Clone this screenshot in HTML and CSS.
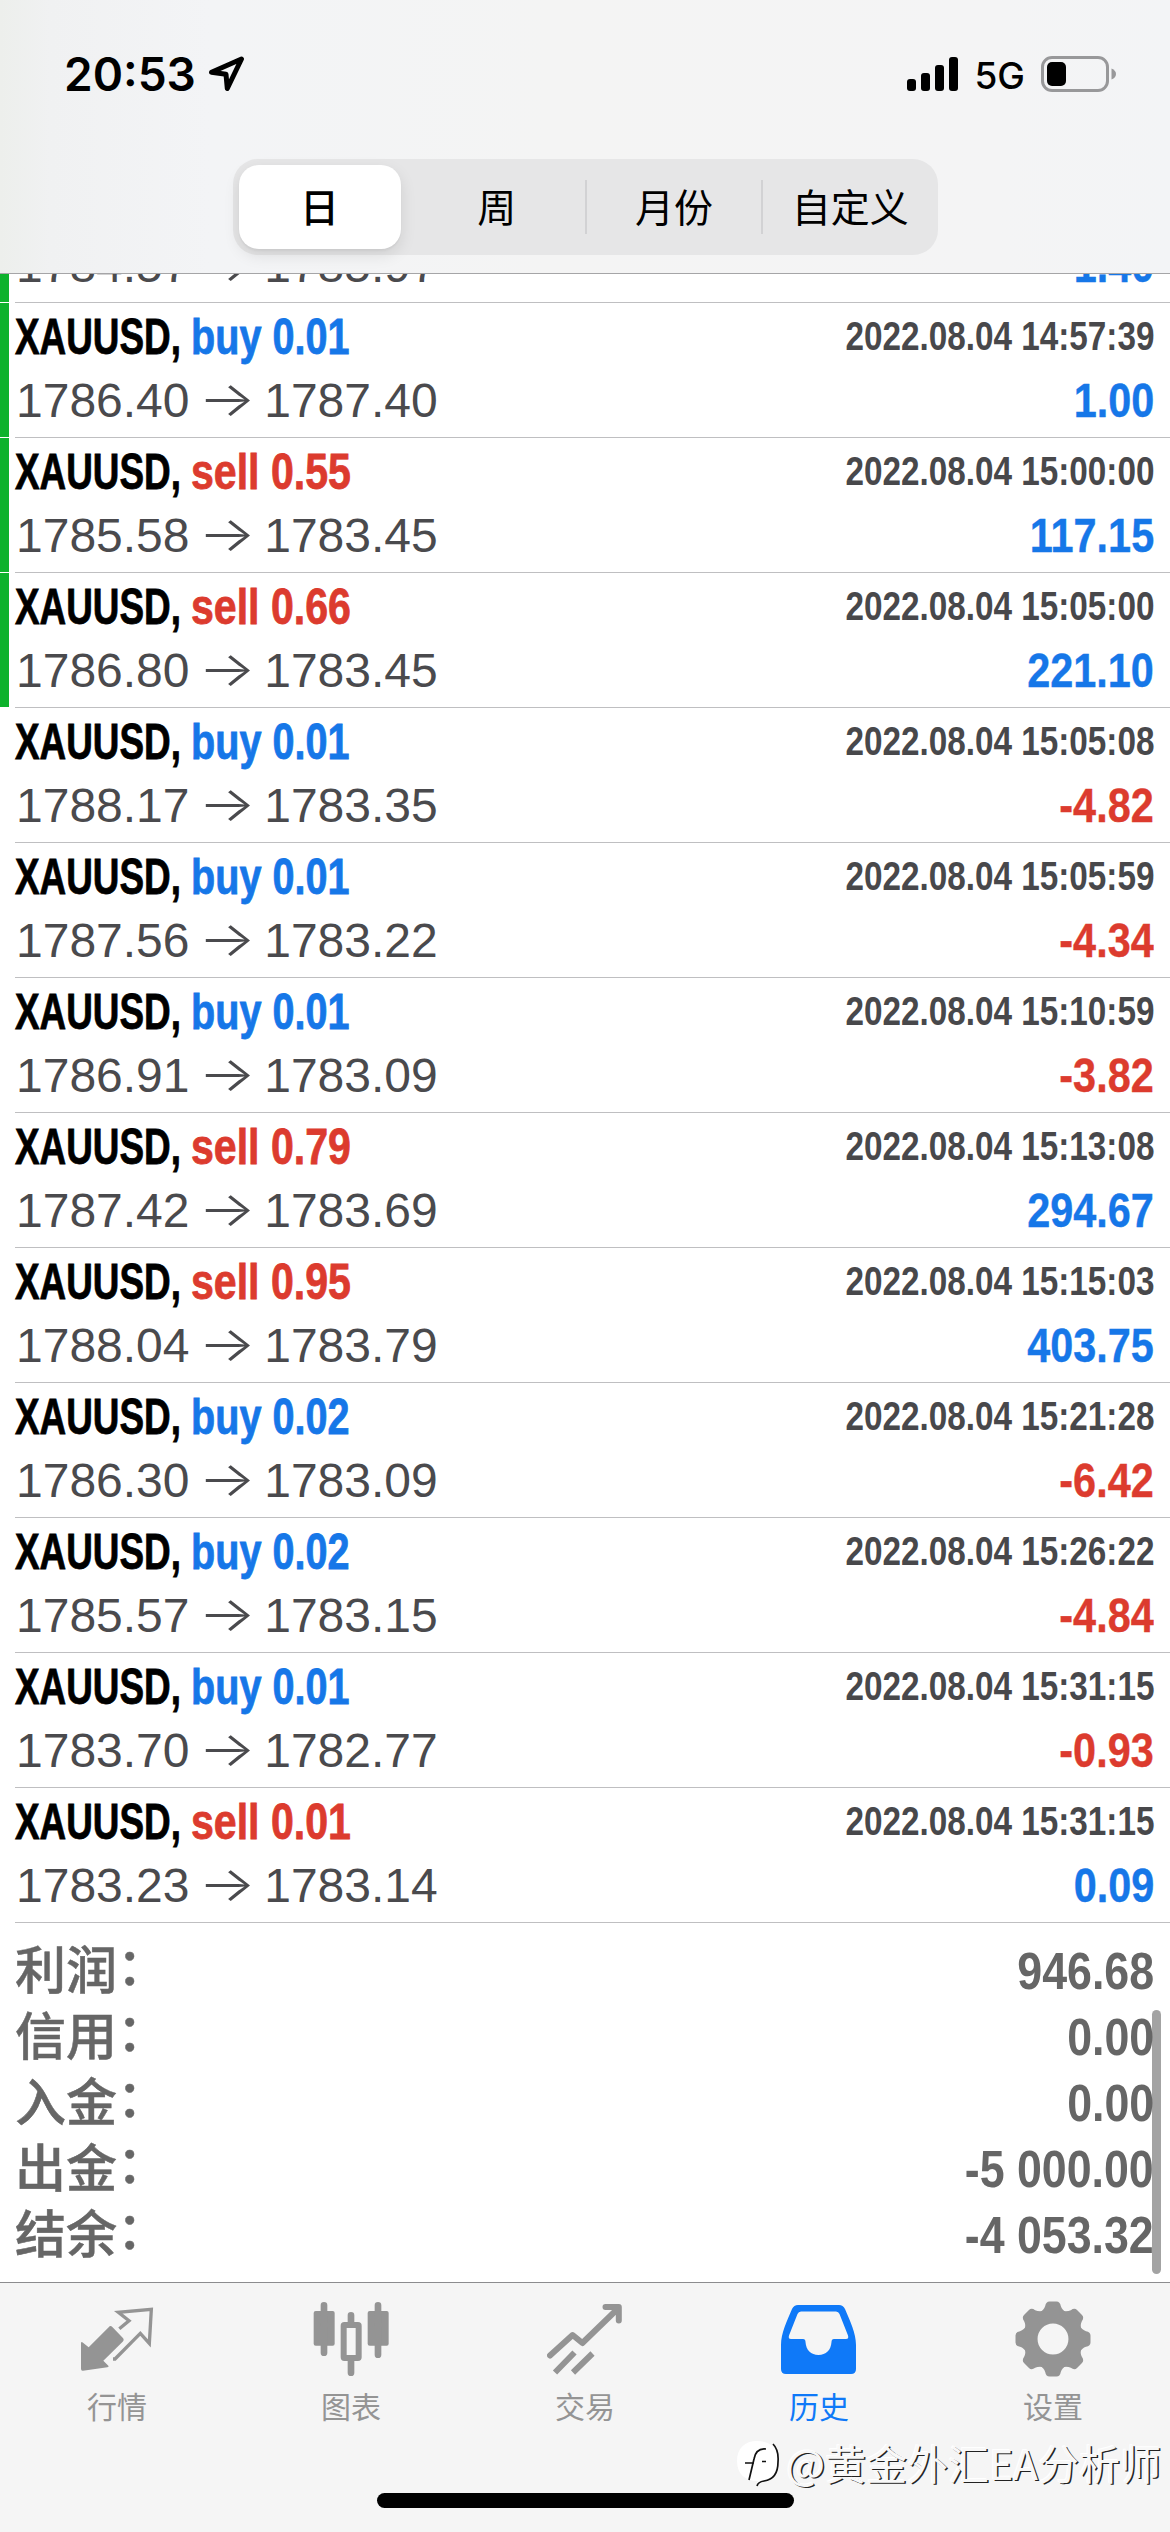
FILE: index.html
```html
<!DOCTYPE html>
<html lang="zh-CN">
<head>
<meta charset="utf-8">
<title>历史</title>
<link rel="stylesheet" href="styles.css">
</head>
<body>
<div class="screen">
  <header class="header">
    <div class="status">
      <div class="status-left">
        <span class="time">20:53</span>
        <svg class="location" viewBox="0 0 37 36" width="37" height="36"><path d="M3.5 16.3 33.5 3 19.3 32.5 18 18.3Z"/></svg>
      </div>
      <div class="status-right">
        <svg class="signal" viewBox="0 0 52 34" width="52" height="34"><rect x="0" y="22" width="9" height="12" rx="3"/><rect x="14" y="16" width="9" height="18" rx="3"/><rect x="28" y="8" width="9" height="26" rx="3"/><rect x="42" y="0" width="9" height="34" rx="3"/></svg>
        <span class="network">5G</span>
        <svg class="battery" viewBox="0 0 75 36" width="75" height="36"><rect class="battery-case" x="1.5" y="1.5" width="65" height="33" rx="9.5"/><rect x="6" y="6" width="19" height="24" rx="5"/><path class="battery-tip" d="M70.5 12.5Q75 14.5 75 18T70.5 23.500Z"/></svg>
      </div>
    </div>
    <nav class="segments">
      <span class="segment selected"><b>日</b></span>
      <span class="segment">周</span>
      <span class="segment divided">月份</span>
      <span class="segment divided">自定义</span>
    </nav>
  </header>

  <main class="history">
    <ul class="deals">
      <li class="deal cut closed"><div class="line bottom"><span class="price">1784.57 <i>→</i> 1785.97</span><span class="profit up">1.40</span></div></li>
      <li class="deal closed"><div class="line top"><span class="symbol">XAUUSD,</span><span class="action buy">buy 0.01</span><time>2022.08.04 14:57:39</time></div><div class="line bottom"><span class="price">1786.40 <i>→</i> 1787.40</span><span class="profit up">1.00</span></div></li>
      <li class="deal closed"><div class="line top"><span class="symbol">XAUUSD,</span><span class="action sell">sell 0.55</span><time>2022.08.04 15:00:00</time></div><div class="line bottom"><span class="price">1785.58 <i>→</i> 1783.45</span><span class="profit up">117.15</span></div></li>
      <li class="deal closed"><div class="line top"><span class="symbol">XAUUSD,</span><span class="action sell">sell 0.66</span><time>2022.08.04 15:05:00</time></div><div class="line bottom"><span class="price">1786.80 <i>→</i> 1783.45</span><span class="profit up">221.10</span></div></li>
      <li class="deal"><div class="line top"><span class="symbol">XAUUSD,</span><span class="action buy">buy 0.01</span><time>2022.08.04 15:05:08</time></div><div class="line bottom"><span class="price">1788.17 <i>→</i> 1783.35</span><span class="profit down">-4.82</span></div></li>
      <li class="deal"><div class="line top"><span class="symbol">XAUUSD,</span><span class="action buy">buy 0.01</span><time>2022.08.04 15:05:59</time></div><div class="line bottom"><span class="price">1787.56 <i>→</i> 1783.22</span><span class="profit down">-4.34</span></div></li>
      <li class="deal"><div class="line top"><span class="symbol">XAUUSD,</span><span class="action buy">buy 0.01</span><time>2022.08.04 15:10:59</time></div><div class="line bottom"><span class="price">1786.91 <i>→</i> 1783.09</span><span class="profit down">-3.82</span></div></li>
      <li class="deal"><div class="line top"><span class="symbol">XAUUSD,</span><span class="action sell">sell 0.79</span><time>2022.08.04 15:13:08</time></div><div class="line bottom"><span class="price">1787.42 <i>→</i> 1783.69</span><span class="profit up">294.67</span></div></li>
      <li class="deal"><div class="line top"><span class="symbol">XAUUSD,</span><span class="action sell">sell 0.95</span><time>2022.08.04 15:15:03</time></div><div class="line bottom"><span class="price">1788.04 <i>→</i> 1783.79</span><span class="profit up">403.75</span></div></li>
      <li class="deal"><div class="line top"><span class="symbol">XAUUSD,</span><span class="action buy">buy 0.02</span><time>2022.08.04 15:21:28</time></div><div class="line bottom"><span class="price">1786.30 <i>→</i> 1783.09</span><span class="profit down">-6.42</span></div></li>
      <li class="deal"><div class="line top"><span class="symbol">XAUUSD,</span><span class="action buy">buy 0.02</span><time>2022.08.04 15:26:22</time></div><div class="line bottom"><span class="price">1785.57 <i>→</i> 1783.15</span><span class="profit down">-4.84</span></div></li>
      <li class="deal"><div class="line top"><span class="symbol">XAUUSD,</span><span class="action buy">buy 0.01</span><time>2022.08.04 15:31:15</time></div><div class="line bottom"><span class="price">1783.70 <i>→</i> 1782.77</span><span class="profit down">-0.93</span></div></li>
      <li class="deal"><div class="line top"><span class="symbol">XAUUSD,</span><span class="action sell">sell 0.01</span><time>2022.08.04 15:31:15</time></div><div class="line bottom"><span class="price">1783.23 <i>→</i> 1783.14</span><span class="profit up">0.09</span></div></li>
    </ul>
    <dl class="summary">
      <div><dt>利润<span>：</span></dt><dd>946.68</dd></div>
      <div><dt>信用<span>：</span></dt><dd>0.00</dd></div>
      <div><dt>入金<span>：</span></dt><dd>0.00</dd></div>
      <div><dt>出金<span>：</span></dt><dd>-5 000.00</dd></div>
      <div><dt>结余<span>：</span></dt><dd>-4 053.32</dd></div>
    </dl>
    <div class="scrollbar"></div>
  </main>

  <footer class="tabbar">
    <nav class="tabs">
      <a class="tab">
        <svg viewBox="84 90 228 234" width="76" height="78"><path class="solid" d="M90 219Q91 213 96 218L113 232 173 172Q178 165 184 171L215 203Q221 209 215 215L157 272 172 287Q175 291 169 292L96 302Q90 303 90 296Z"/><path class="line-art" stroke-width="10" d="M205 176 234 152 202 127 301 118 295 220 268 190 192 267H186"/></svg>
        <span>行情</span>
      </a>
      <a class="tab">
        <svg viewBox="787 90 228 234" width="76" height="78"><rect class="solid" x="789" y="123" width="63" height="104" rx="6"/><rect class="solid" x="951" y="123" width="63" height="104" rx="6"/><path class="line-art round" stroke-width="20" d="M820 106V248M982 106V254M901 136V160M901 268V308"/><rect class="line-art" stroke-width="18" x="879" y="165" width="45" height="99" rx="2"/></svg>
        <span>图表</span>
      </a>
      <a class="tab">
        <svg viewBox="547 2300 76 78" width="76" height="78"><path class="line-art round" stroke-width="6" d="M550 2355.500 572.600 2335 582.400 2343 618 2308.500M605.500 2307H618.800V2320.500"/><path class="line-art" stroke-width="6" d="M555 2372.500 574.500 2352.500M573 2372.500 592.500 2353.500"/></svg>
        <span>交易</span>
      </a>
      <a class="tab active">
        <svg viewBox="781 2300 76 78" width="76" height="78"><path class="solid" fill-rule="evenodd" d="M798 2305H839Q843 2305 845 2309C850 2321 856 2333 856 2345V2369Q856 2374 851 2374H786Q781 2374 781 2369V2345C781 2333 787 2321 792 2309Q794 2305 798 2305ZM801 2311.500Q798.500 2311.500 797.500 2314L789 2335.500Q788 2339 791 2339H803Q805.500 2339 805.500 2342C806 2350 811 2355 818.500 2355S831 2350 831.500 2342Q831.500 2339 834 2339H846Q849 2339 848 2335.500L839.500 2314Q838.500 2311.500 836 2311.500Z"/></svg>
        <span>历史</span>
      </a>
      <a class="tab">
        <svg viewBox="-38 -39 76 78" width="76" height="78"><defs><path id="tooth" d="M-14-26Q-9-29-7.800-33-7-37.500-3.500-37.500H3.500Q7-37.500 7.800-33 9-29 14-26Z"/></defs><circle class="line-art" r="22.700" stroke-width="14.500"/><g class="solid"><use href="#tooth"/><use href="#tooth" transform="rotate(45)"/><use href="#tooth" transform="rotate(90)"/><use href="#tooth" transform="rotate(135)"/><use href="#tooth" transform="rotate(180)"/><use href="#tooth" transform="rotate(225)"/><use href="#tooth" transform="rotate(270)"/><use href="#tooth" transform="rotate(315)"/></g></svg>
        <span>设置</span>
      </a>
    </nav>
    <div class="home-bar"></div>
    <div class="watermark">
      <svg viewBox="0 0 44 48" width="44" height="48"><path fill="#fff" d="M20 1C32 1 41 7 41 20S34 39 24 42L19 46 21 41C8 41 0 34 0 21S8 1 20 1Z"/><path fill="none" stroke="#111" stroke-width="1.700" d="M29 9Q19 8 17 19L12 40M8 23H17M25 21.500H29M36 4Q42 10 41 22C41 36 34 40 27 41Q21 42 20 46"/></svg>
      <span>@黄金外汇EA分析师</span>
    </div>
  </footer>
</div>
</body>
</html>
```
FILE: styles.css
```css
* { box-sizing: border-box; }
body {
  margin: 0;
  background: #fff;
  font-family: "Liberation Sans", "Noto Sans CJK SC", sans-serif;
}
ul, dl, dd { margin: 0; padding: 0; list-style: none; }

.screen {
  width: 1170px;
  height: 2532px;
  display: flex;
  flex-direction: column;
  overflow: hidden;
}

/* header */
.header {
  height: 274px;
  flex: none;
  border-bottom: 1px solid #a5a5a7;
  background: linear-gradient(90deg, #edefec 0, #f0f1f2 50px, #f3f4f6 210px, #f4f4f4 550px, #f4f4f5 1000px, #f3f4f6 100%);
}
.status {
  height: 159px;
  padding: 0 54px 11px 64px;
  display: flex;
  justify-content: space-between;
  align-items: center;
  font-family: Inter, sans-serif;
}
.status-left, .status-right { display: flex; align-items: center; }
.status-left { gap: 12px; }
.time { font-size: 46px; font-weight: 600; line-height: 60px; }
.location { fill: none; stroke: #000; stroke-width: 5; stroke-linejoin: round; }
.network { font-size: 37px; font-weight: 500; line-height: 48px; margin: 3px 16px 0 15px; }
.battery-case { fill: none; stroke: #98989a; stroke-width: 3; }
.battery-tip { fill: #98989a; }

.segments {
  width: 705px;
  height: 96px;
  margin: 0 auto;
  display: grid;
  grid-template-columns: repeat(4, 1fr);
  align-items: center;
  border-radius: 25px;
  background: #e6e6e7;
  font-family: "Noto Sans CJK SC", sans-serif;
  font-size: 39px;
}
.segment { height: 54px; line-height: 50px; text-align: center; }
.segment.divided { border-left: 2px solid #d2d2d4; }
.segment.selected {
  width: 162px;
  height: 84px;
  margin-left: 6px;
  line-height: 80px;
  border-radius: 20px;
  background: #fff;
  box-shadow: 0 6px 16px rgba(0, 0, 0, .1), 0 2px 2px rgba(0, 0, 0, .04);
}
.segment b { font-weight: 500; }

/* deal list */
.history { position: relative; height: 2008px; flex: none; overflow: hidden; }
.deal {
  height: 135px;
  display: grid;
  grid-template-rows: 68px 59px;
  padding: 0 16px 0 15px;
  background:
    linear-gradient(#bfbfc1, #bfbfc1) 15px 100% / 100% 1px no-repeat;
}
.deal.closed {
  background:
    linear-gradient(#bfbfc1, #bfbfc1) 15px 100% / 100% 1px no-repeat,
    linear-gradient(#0db22c, #0db22c) 0 0 / 9px calc(100% - 1px) no-repeat;
}
.deal.cut { height: 29px; grid-template-rows: 59px; align-content: end; padding-bottom: 8px; overflow: hidden; }
.line { display: flex; align-items: flex-start; white-space: nowrap; }
.symbol, .action, time, .profit { font-weight: 700; }
.symbol, .action { font-size: 49.500px; line-height: 68px; transform-origin: 0 0; -webkit-text-stroke: .8px currentColor; }
.symbol { width: 176px; transform: scaleX(.745); }
.action { width: 160px; transform: scaleX(.8); }
.action.sell { transform: scaleX(.83); }
time {
  margin-left: auto;
  font-size: 40px;
  line-height: 66px;
  color: #48484b;
  transform: scaleX(.832);
  transform-origin: 100% 0;
}
.price { font-size: 48px; line-height: 59px; color: #4a4a4d; padding-left: 1px; }
.price i {
  display: inline-block;
  width: 48px;
  font: 300 48px/40px Inter, sans-serif;
  text-align: center;
  transform: translateY(-1px) scaleX(1.26);
}
.profit {
  margin-left: auto;
  font-size: 49px;
  line-height: 58px;
  transform: scaleX(.845);
  transform-origin: 100% 0;
  -webkit-text-stroke: .4px currentColor;
}
.buy, .up { color: #1677e8; }
.sell, .down { color: #dc3b2e; }

/* totals */
.summary { padding: 14px 16px 0 15px; color: #666; }
.summary div { height: 66px; display: flex; justify-content: space-between; white-space: nowrap; }
.summary dt {
  padding-top: 2px;
  font-size: 51px;
  font-weight: 500;
  font-family: "Liberation Sans", "Noto Sans CJK SC", sans-serif;
  line-height: 66px;
  -webkit-text-stroke: .5px currentColor;
}
.summary dt span { display: inline-block; line-height: 60px; transform: translateY(-4px); }
.summary dd {
  font-size: 52px;
  font-weight: 700;
  line-height: 68px;
  transform: scaleX(.86);
  transform-origin: 100% 0;
}
.scrollbar {
  position: absolute;
  top: 1736px;
  right: 9px;
  width: 9px;
  height: 264px;
  border-radius: 5px;
  background: rgba(0, 0, 0, .36);
}

/* tab bar */
.tabbar {
  position: relative;
  flex: 1;
  border-top: 1px solid #8c8c8e;
  background: #f5f5f5;
}
.tabs { display: grid; grid-template-columns: repeat(5, 1fr); height: 210px; }
.tab {
  display: flex;
  flex-direction: column;
  align-items: center;
  padding-top: 17px;
  color: #949494;
  font: 400 30px/44px "Noto Sans CJK SC", sans-serif;
}
.tab span { margin-top: 5px; }
.tab.active { color: #0f79f8; }
.solid { fill: currentColor; }
.line-art { fill: none; stroke: currentColor; }
.round { stroke-linecap: round; stroke-linejoin: round; }
.home-bar { width: 417px; height: 15px; margin: 0 auto; border-radius: 8px; background: #000; }
.watermark {
  position: absolute;
  right: 9px;
  bottom: 44px;
  display: flex;
  align-items: center;
  gap: 5px;
  color: #f8f8f8;
  font: 400 41px/50px "Noto Sans CJK SC", sans-serif;
  text-shadow: 1.500px 1px 0 #222, -1px -1px 0 #fff;
}
.watermark svg { margin-top: 5px; }
```
